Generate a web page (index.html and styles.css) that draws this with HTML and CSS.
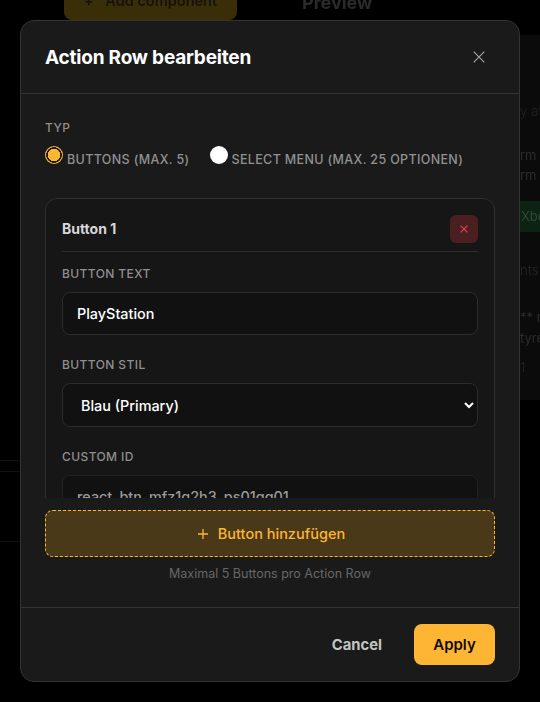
FILE: index.html
```html
<!DOCTYPE html>
<html lang="de">
<head>
<meta charset="utf-8">
<title>Action Row bearbeiten</title>
<link rel="stylesheet" href="styles.css">
</head>
<body>
<div class="backdrop">
  <div class="top-bar">
    <div class="add-comp"><span class="add-plus">+</span> Add component</div>
    <div class="preview-title">Preview</div>
  </div>
  <div class="side-panel">
    <div class="frag f1">y at</div>
    <div class="frag f2">rm</div>
    <div class="frag f3">rm</div>
    <div class="frag-green">Xbo</div>
    <div class="frag f4">nts</div>
    <div class="frag f5">** re</div>
    <div class="frag f6">tyre</div>
    <div class="frag f7">1</div>
  </div>
  <div class="bg-line l1"></div>
  <div class="bg-line l2"></div>
  <div class="bg-line l3"></div>
</div>

<div class="modal">
  <header class="modal-head">
    <h2 class="modal-title">Action Row bearbeiten</h2>
    <svg class="close-icon" viewBox="0 0 12 12" width="12" height="12" aria-hidden="true"><path d="M.7.7l10.6 10.6M11.3.7L.7 11.3"/></svg>
  </header>

  <div class="modal-scroll">
    <div class="label type-label">TYP</div>
    <div class="radio-row">
      <label class="radio-opt"><input type="radio" name="t" class="radio" checked><span>Buttons (max. 5)</span></label>
      <label class="radio-opt"><input type="radio" name="t" class="radio"><span>Select Menu (max. 25 Optionen)</span></label>
    </div>

    <section class="card">
      <div class="card-head">
        <strong class="card-title">Button 1</strong>
        <button class="del-btn" type="button" aria-label="Entfernen">
          <svg viewBox="0 0 8 8" width="8" height="8" aria-hidden="true"><path d="M.6.6l6.8 6.8M7.4.6L.6 7.4"/></svg>
        </button>
      </div>
      <div class="field">
        <div class="label">Button Text</div>
        <input class="control" type="text" value="PlayStation">
      </div>
      <div class="field">
        <div class="label">Button Stil</div>
        <select class="control select"><option>Blau (Primary)</option></select>
      </div>
      <div class="field">
        <div class="label">Custom ID</div>
        <input class="control muted" type="text" value="react_btn_mfz1q2h3_ps01qq01">
      </div>
    </section>
  </div>

  <div class="add-area">
    <button class="add-btn" type="button">
      <svg class="plus" viewBox="0 0 10 10" width="10" height="10" aria-hidden="true"><path d="M5 0v10M0 5h10"/></svg>
      Button hinzufügen
    </button>
    <p class="hint">Maximal 5 Buttons pro Action Row</p>
  </div>

  <footer class="modal-foot">
    <button class="cancel" type="button">Cancel</button>
    <button class="apply" type="button">Apply</button>
  </footer>
</div>
</body>
</html>
```
FILE: styles.css
```css
* { box-sizing: border-box; }
html, body { margin: 0; height: 100%; }
body {
  width: 540px;
  height: 702px;
  overflow: hidden;
  background: #000;
  font-family: Inter, "Open Sans", "Liberation Sans", sans-serif;
  position: relative;
}

.backdrop { position: absolute; inset: 0; filter: blur(.6px); }
.top-bar { position: absolute; left: 64px; top: -14px; display: flex; gap: 65px; }
.add-comp {
  width: 173px; height: 34px; border-radius: 8px; background: #3a2e08;
  color: #16120a; font-size: 14.5px; font-weight: 600; text-align: center; line-height: 29px;
}
.add-plus { margin-right: 8px; }
.preview-title { color: #2b2b2b; font-size: 18px; font-weight: 700; line-height: 34px; }
.side-panel { position: absolute; left: 515px; top: 35px; width: 25px; height: 365px; background: #0b0b0b; color: #2c2c2c; font-size: 13px; overflow: hidden; }
.frag { position: absolute; left: 5px; white-space: nowrap; line-height: 16px; }
.f1 { top: 68px; color: #1e1e1e; }
.f2 { top: 112px; }
.f3 { top: 132px; }
.f4 { top: 227px; color: #222; }
.f5 { top: 274px; }
.f6 { top: 295px; }
.f7 { top: 324px; color: #1e1e1e; }
.frag-green { position: absolute; left: 5px; top: 166px; width: 20px; height: 31px; background: #0c2212; color: #2f4a36; line-height: 31px; padding-left: 1px; }
.bg-line { position: absolute; left: 0; width: 20px; height: 1px; background: #111; }
.l1 { top: 460px; }
.l2 { top: 471px; }
.l3 { top: 541px; }

.modal {
  position: absolute; left: 20px; top: 20px; width: 500px; height: 662px;
  background: #1a1a1a; border: 1px solid #333; border-radius: 14px;
  display: flex; flex-direction: column; overflow: hidden;
}
.modal-head {
  height: 73px; flex: none; padding: 0 34px 0 24px;
  display: flex; align-items: center; justify-content: space-between;
  border-bottom: 1px solid #333;
}
.modal-title { margin: 0; color: #fff; font-size: 19px; font-weight: 700; letter-spacing: -.2px; }
.close-icon { fill: none; stroke: #a0a0a0; stroke-width: 1.2; }

.modal-scroll { height: 404px; flex: none; padding: 26px 24px 0; overflow: hidden; }
.label { color: #8f8f8f; font-size: 12px; font-weight: 500; text-transform: uppercase; letter-spacing: .4px; line-height: 16px; }
.radio-row { display: flex; gap: 20px; margin-top: 10px; height: 18px; }
.radio-opt { display: flex; align-items: flex-start; gap: 4px; color: #919191; font-size: 12.5px; font-weight: 500; text-transform: uppercase; letter-spacing: .35px; line-height: 27px; }
.radio {
  appearance: none; margin: 0; width: 18px; height: 18px; border-radius: 50%;
  background: #fff; flex: none;
}
.radio:checked {
  background: radial-gradient(circle, #ffb534 0 6px, #1a1a1a 6.5px 7.6px, #ffb534 8px);
}

.card { margin-top: 34px; border: 1px solid #303030; border-radius: 12px; background: #161616; padding: 16px; height: 340px; }
.card-head { height: 37px; display: flex; align-items: flex-start; justify-content: space-between; border-bottom: 1px solid #2d2d2d; }
.card-title { color: #d8d8d8; font-size: 14px; font-weight: 700; line-height: 28px; }
.del-btn {
  width: 28px; height: 28px; padding: 0; border: 0; border-radius: 6px; background: #4a1f22;
  display: flex; align-items: center; justify-content: center;
}
.del-btn svg { fill: none; stroke: #e2404f; stroke-width: 1.2; }
.field { margin-top: 14px; }
.field + .field { margin-top: 22px; }
.field .label { margin-bottom: 10px; }
.control {
  display: block; width: 100%; height: 43px; padding: 0 14px;
  border: 1px solid #2c2c2c; border-radius: 8px; background: #111; color: #fff;
  font: 500 14.4px Inter, "Open Sans", sans-serif; outline: none;
}
.select { height: 44px; }
.muted { color: #9a9a9a; border-color: #222; }

.add-area { flex: none; padding: 12px 24px 0; height: 109px; }
.add-btn {
  display: flex; align-items: center; justify-content: center; gap: 10px; width: 100%; height: 47px;
  border: 1px dashed #ffb534; border-radius: 8px; background: #4a3919; color: #ffb534;
  font: 500 14.5px Inter, "Open Sans", sans-serif; cursor: pointer; padding: 0 0 0 3px;
}
.plus { fill: none; stroke: #ffb534; stroke-width: 1.3; }
.hint { margin: 9px 0 0; text-align: center; color: #676767; font-size: 12.5px; line-height: 16px; }

.modal-foot {
  flex: 1; border-top: 1px solid #333; padding: 16px 24px;
  display: flex; align-items: flex-start; justify-content: flex-end; gap: 32px;
}
.cancel { height: 41px; padding: 0; border: 0; background: none; color: #c4c4c4; font: 700 14.8px Inter, "Open Sans", sans-serif; }
.apply { width: 81px; height: 41px; border: 0; border-radius: 8px; background: #ffb534; color: #0e0b04; font: 600 15px Inter, "Open Sans", sans-serif; }
```
